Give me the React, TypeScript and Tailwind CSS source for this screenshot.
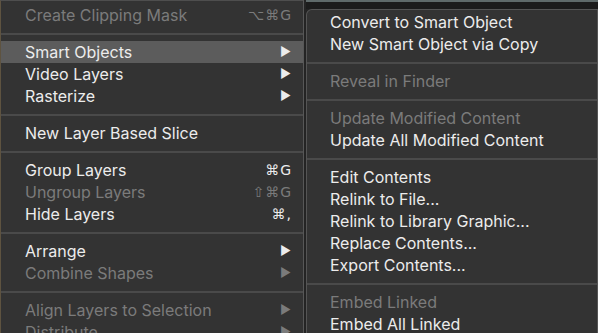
type Item = {
  label?: string
  disabled?: boolean
  active?: boolean
  shortcut?: string
  submenu?: boolean
  sep?: boolean
}

const leftItems: Item[] = [
  { label: 'Create Clipping Mask', disabled: true, shortcut: '⌥⌘G' },
  { sep: true },
  { label: 'Smart Objects', active: true, submenu: true },
  { label: 'Video Layers', submenu: true },
  { label: 'Rasterize', submenu: true },
  { sep: true },
  { label: 'New Layer Based Slice' },
  { sep: true },
  { label: 'Group Layers', shortcut: '⌘G' },
  { label: 'Ungroup Layers', disabled: true, shortcut: '⇧⌘G' },
  { label: 'Hide Layers', shortcut: '⌘,' },
  { sep: true },
  { label: 'Arrange', submenu: true },
  { label: 'Combine Shapes', disabled: true, submenu: true },
  { sep: true },
  { label: 'Align Layers to Selection', disabled: true, submenu: true },
  { label: 'Distribute', disabled: true, submenu: true },
]

const rightItems: Item[] = [
  { label: 'Convert to Smart Object' },
  { label: 'New Smart Object via Copy' },
  { sep: true },
  { label: 'Reveal in Finder', disabled: true },
  { sep: true },
  { label: 'Update Modified Content', disabled: true },
  { label: 'Update All Modified Content' },
  { sep: true },
  { label: 'Edit Contents' },
  { label: 'Relink to File...' },
  { label: 'Relink to Library Graphic...' },
  { label: 'Replace Contents...' },
  { label: 'Export Contents...' },
  { sep: true },
  { label: 'Embed Linked', disabled: true },
  { label: 'Embed All Linked' },
]

function Separator() {
  return (
    <div className="h-[15px] shrink-0 flex items-center">
      <div className="w-full h-[2px] bg-[#4a4a4a]" />
    </div>
  )
}

function Row({ item, left }: { item: Item; left: boolean }) {
  const color = item.disabled ? 'text-[#7b7b7b]' : 'text-[#ececec]'
  return (
    <div
      className={`h-[22px] shrink-0 flex items-center ${left ? 'pl-[24px] pr-[11px]' : 'pl-[23px]'} ${
        item.active ? 'bg-[#5c5c5c]' : ''
      }`}
    >
      <span className={`flex-1 whitespace-nowrap text-[16px] leading-none ${color}`}>{item.label}</span>
      {item.shortcut && (
        <span
          className={`text-[14px] leading-none tracking-[1px] ${color}`}
          style={{ fontFamily: '"DejaVu Sans", sans-serif' }}
        >
          {item.shortcut}
        </span>
      )}
      {item.submenu && <span className={`text-[12px] leading-none mr-[1px] ${color}`}>▶</span>}
    </div>
  )
}

export default function App() {
  return (
    <div
      className="w-[598px] h-[333px] overflow-hidden bg-[#232323] flex"
      style={{ fontFamily: 'Inter, "Liberation Sans", sans-serif' }}
    >
      {/* Main context menu */}
      <div className="w-[303px] shrink-0 bg-[#333333] border-t border-[#4e4e4e] border-l border-l-[#5e5340] pt-[3px] flex flex-col">
        {leftItems.map((item, i) =>
          item.sep ? <Separator key={i} /> : <Row key={i} item={item} left />
        )}
      </div>

      <div className="w-[3px] shrink-0 border-l border-[#575757] bg-[#242424]" />

      {/* Smart Objects submenu */}
      <div className="flex-1 flex flex-col">
        <div className="h-[9px] shrink-0 border-t-2 border-[#5f6a6a] bg-[#1c1c1c]" />
        <div className="flex-1 bg-[#333333] border-t border-l border-r border-[#555555] rounded-tl-[6px] pt-[1px] flex flex-col">
          {rightItems.map((item, i) =>
            item.sep ? <Separator key={i} /> : <Row key={i} item={item} left={false} />
          )}
        </div>
      </div>
    </div>
  )
}
